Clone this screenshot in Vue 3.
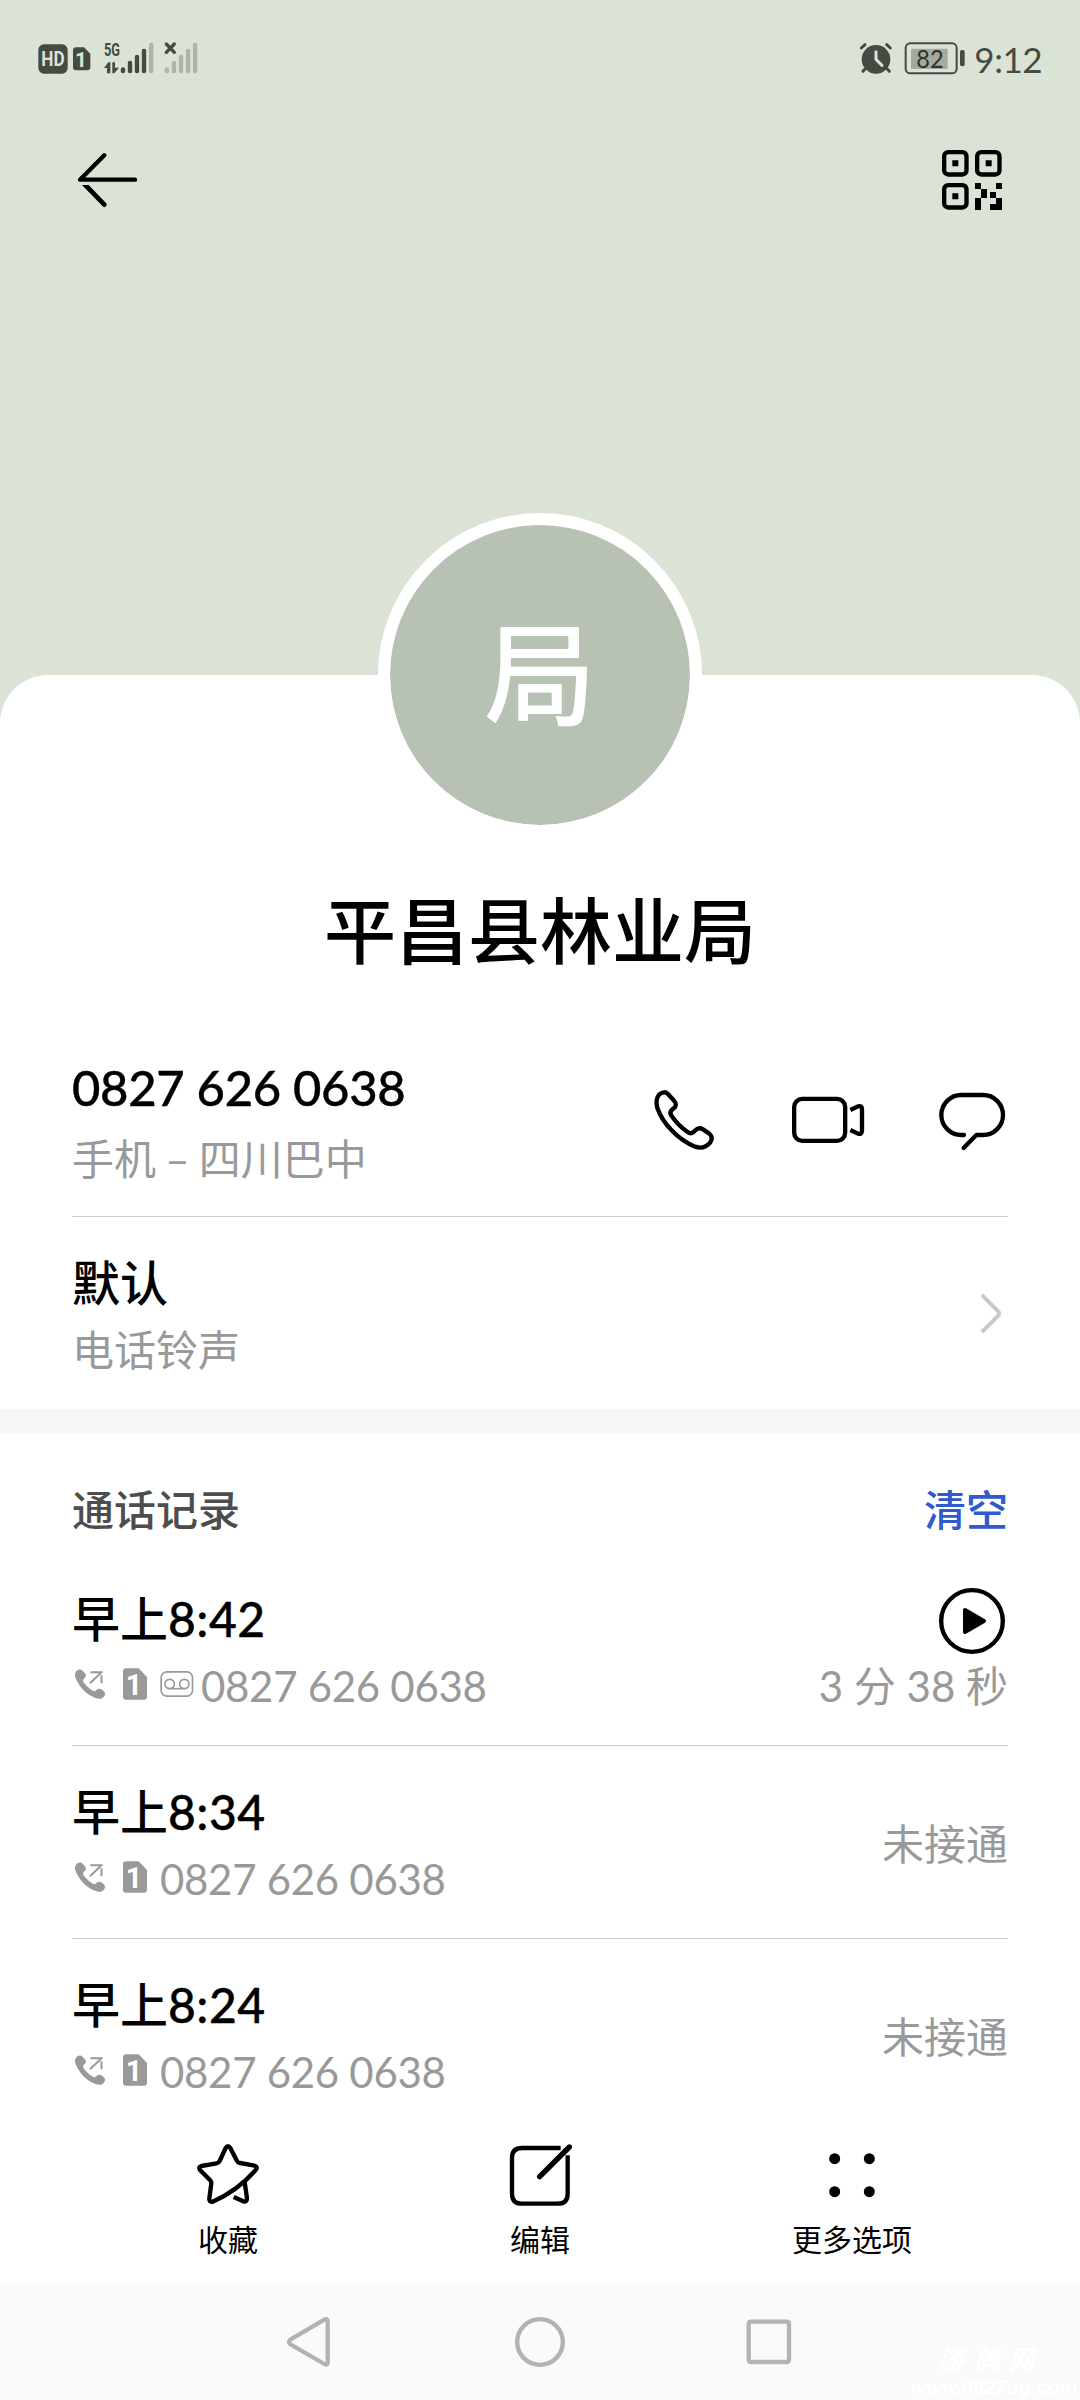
<script setup>
const calls = [
  { period: '早上', time: '8:42', number: '0827 626 0638', recorded: true, result: '3 分 38 秒' },
  { period: '早上', time: '8:34', number: '0827 626 0638', recorded: false, result: '未接通' },
  { period: '早上', time: '8:24', number: '0827 626 0638', recorded: false, result: '未接通' },
]
const firstSignal = [
  { x: 362.5, y: 142, dim: false },
  { x: 383.5, y: 122, dim: false },
  { x: 404.5, y: 104, dim: false },
  { x: 425.5, y: 86, dim: false },
  { x: 447, y: 68, dim: true },
]
const secondSignal = [
  { x: 494, y: 142 },
  { x: 515.5, y: 122 },
  { x: 536.5, y: 104 },
  { x: 558, y: 86 },
  { x: 579, y: 68 },
]
</script>

<template>
  <div class="screen">
    <header class="hero">
      <div class="status">
        <svg class="status-left" viewBox="108 60 492 120">
          <rect x="115" y="73" width="88" height="88" rx="17" class="ink" />
          <text x="159" y="138" class="hd" textLength="70" lengthAdjust="spacingAndGlyphs">HD</text>
          <path d="M228 82H252L271 101V142Q271 151 262 151H228Q219 151 219 142V91Q219 82 228 82Z" class="ink" />
          <text x="243" y="140" class="sim-digit">1</text>
          <text x="312" y="108" class="net" textLength="48" lengthAdjust="spacingAndGlyphs">5G</text>
          <path d="M312 144L325 127H331V160H321V144ZM337 127H345V143H357L343 160H337Z" class="ink" />
          <rect v-for="b in firstSignal" :key="b.x" :x="b.x" :y="b.y" width="13" :height="160 - b.y" rx="6" :class="b.dim ? 'dim' : 'ink'" />
          <rect v-for="b in secondSignal" :key="b.x" :x="b.x" :y="b.y" width="13" :height="160 - b.y" rx="6" class="dim" />
          <path d="M499 72L523 97M523 72L499 97" class="ink-line" stroke-width="10" />
        </svg>
        <div class="status-right">
          <svg class="status-icons" viewBox="108 60 336 120">
            <circle cx="168" cy="118" r="43" class="ink" />
            <path d="M168 95V118L186 136" class="hands" />
            <path d="M124 84L135 74M200 74L211 84M135 147L129 154M202 147L208 154" class="ink-line" stroke-width="9" />
            <rect x="257" y="70" width="153" height="90" rx="14" class="ink-line" stroke-width="6" />
            <rect x="273" y="86" width="110" height="61" rx="3" class="charge" />
            <rect x="420" y="90" width="14" height="49" rx="6" class="ink" />
            <text x="330" y="143" class="percent" textLength="82" lengthAdjust="spacingAndGlyphs">82</text>
          </svg>
          <span class="clock">9:12</span>
        </div>
      </div>
      <div class="appbar">
        <svg class="back" viewBox="228 390 192 180">
          <path d="M313 406L240 479H405" class="line" />
          <path d="M246 495H266L318 549A6.5 6.5 0 0 1 308 559Z" />
        </svg>
        <svg class="qr" viewBox="366 390 180 180">
          <rect x="372.500" y="396.500" width="67" height="67" rx="12" class="line" />
          <rect x="471.500" y="396.500" width="67" height="67" rx="12" class="line" />
          <rect x="372.500" y="495.500" width="67" height="67" rx="12" class="line" />
          <path d="M397 421h18v18h-18zM497 421h18v18h-18zM397 520h18v18h-18zM465 489h18v18h18v27h-18v-27h-18zM528 489h18v18h-18zM510 516h18v18h-18zM465 534h18v36h-18zM528 534h18v36h-36v-18h18z" />
        </svg>
      </div>
    </header>

    <main class="sheet">
      <div class="avatar">局</div>
      <h1 class="name">平昌县林业局</h1>

      <section class="row contact">
        <div class="info">
          <p class="primary phone">0827 626 0638</p>
          <p class="secondary place">手机 – 四川巴中</p>
        </div>
        <div class="actions">
          <svg viewBox="84 105 216 216">
            <path class="line" d="M118 133C127 125 137 125 144 132L162 152C170 161 169 168 161 175L155 180C149 186 150 191 155 198C168 217 185 234 203 246C210 251 215 251 221 246L226 241C233 234 241 233 249 238L267 250C277 258 277 268 271 277C258 293 243 296 225 290C175 270 129 222 112 174C108 158 109 143 118 133Z" />
          </svg>
          <svg viewBox="516 105 216 216">
            <rect x="522.500" y="146.500" width="153" height="126" rx="24" class="line" />
            <path class="line flat" d="M691 180L714 169Q726 166 726 178V242Q726 254 714 251L691 240" />
          </svg>
          <svg viewBox="948 105 216 216">
            <path class="line" d="M1032 255H1024A60 60 0 0 1 1024 135H1089A60 60 0 0 1 1089 255H1069L1031 294" />
          </svg>
        </div>
      </section>

      <section class="row ringtone">
        <div class="info">
          <p class="primary">默认</p>
          <p class="secondary">电话铃声</p>
        </div>
        <svg class="chevron" viewBox="1080 721.500 84 144">
          <path d="M1089 737L1134 782Q1140 789 1134 796L1089 841" />
        </svg>
      </section>

      <div class="band"></div>

      <section class="log">
        <div class="log-head">
          <span class="log-title">通话记录</span>
          <span class="clear">清空</span>
        </div>
        <article v-for="c in calls" :key="c.time" class="row call">
          <div class="info">
            <p class="primary">{{ c.period }}<span class="time">{{ c.time }}</span></p>
            <p class="secondary detail">
              <svg class="i-out" viewBox="96 834 108 108">
                <path class="mute" d="M108 845C113 837 122 836 128 842L136 851C140 857 137 862 131 867C128 871 129 875 133 880C141 890 150 898 160 903C165 905 168 902 172 898C176 895 181 896 186 899L193 905C197 910 195 916 191 921C183 929 171 927 161 922C137 911 118 890 108 867C104 858 104 851 108 845Z" />
                <path class="mute-line" stroke-width="6" d="M150 880L183 848M151 847H188M184.500 856V880" />
              </svg>
              <svg class="i-sim" viewBox="231 834 108 108">
                <path class="mute" d="M258 835H296L321 861V920Q321 929 312 929H258Q249 929 249 920V844Q249 835 258 835Z" />
                <text x="282" y="915" class="sim-mark">1</text>
              </svg>
              <svg v-if="c.recorded" class="i-vm" viewBox="348 834 126 108">
                <g class="mute-line" stroke-width="5">
                  <rect x="363.500" y="845.500" width="94" height="73" rx="17" />
                  <circle cx="389" cy="882" r="14" />
                  <circle cx="433" cy="882" r="14" />
                  <path d="M389 896H433" />
                </g>
              </svg>
              <span class="num">{{ c.number }}</span>
            </p>
          </div>
          <div class="outcome">
            <svg v-if="c.recorded" class="play" viewBox="468 381 216 192">
              <circle cx="576" cy="483" r="92.500" class="line" />
              <path d="M555 450V516L612 483Z" class="triangle" />
            </svg>
            <p class="secondary">{{ c.result }}</p>
          </div>
        </article>
      </section>
    </main>

    <footer class="toolbar">
      <div class="tool">
        <svg viewBox="96 54 216 216">
          <path class="line" d="M197 84Q204 73 211 84L231 123Q233 128 240 129L284 137Q295 141 287 150C262 179 217 219 158 245Q147 248 148 235L154 190Q154 184 150 180L120 150Q114 141 124 138L170 130Q176 129 179 123Z" />
          <path class="line flat" d="M254 186L261 235Q261 247 250 244L221 231" />
        </svg>
        <span>收藏</span>
      </div>
      <div class="tool">
        <svg viewBox="1032 54 216 216">
          <path class="line flat" d="M1202 84H1086Q1056 84 1056 114V221Q1056 251 1086 251H1193Q1223 251 1223 221V106" />
          <path class="line pen" d="M1139 170L1228 81" />
        </svg>
        <span>编辑</span>
      </div>
      <div class="tool">
        <svg viewBox="408 54 216 216">
          <circle cx="464" cy="116" r="16.500" />
          <circle cx="568" cy="116" r="16.500" />
          <circle cx="464" cy="215" r="16.500" />
          <circle cx="568" cy="215" r="16.500" />
        </svg>
        <span>更多选项</span>
      </div>
    </footer>

    <nav class="navbar">
      <svg viewBox="360 576 180 180"><path d="M391 659L493 599Q503 594 503 605V726Q503 738 493 732L391 673Q383 666 391 659Z" /></svg>
      <svg viewBox="1050 576 180 180"><circle cx="1140" cy="666" r="68.500" /></svg>
      <svg viewBox="180 576 180 180"><rect x="206" y="605" width="121" height="121" rx="6" /></svg>
      <div class="watermark">
        <b>游鸽网</b>
        <i>www.0827ug.com</i>
      </div>
    </nav>
  </div>
</template>

<style>
body {
  margin: 0;
  background: #fff;
}
</style>

<style scoped>
.screen {
  width: 1080px;
  height: 2400px;
  overflow: hidden;
  display: flex;
  flex-direction: column;
  background: #dbe3d7;
  color: #000;
  font-family: Lato, "Noto Sans CJK SC", sans-serif;
}
p,
h1 {
  margin: 0;
}
svg {
  display: block;
  overflow: visible;
  flex: none;
}
.line {
  fill: none;
  stroke: #000;
  stroke-width: 13;
  stroke-linecap: round;
  stroke-linejoin: round;
}
.flat {
  stroke-linecap: butt;
}
.pen {
  stroke-width: 16;
}

.hero {
  height: 675px;
  flex: none;
}
.status {
  display: flex;
  justify-content: space-between;
  padding: 40px 38px 0 36px;
  height: 40px;
}
.status-left {
  width: 164px;
  height: 40px;
}
.status-right {
  display: flex;
  gap: 6px;
}
.status-icons {
  width: 112px;
  height: 40px;
}
.clock {
  font-size: 35px;
  line-height: 38px;
  letter-spacing: -0.5px;
  color: #454a43;
}
.ink {
  fill: #454a43;
}
.dim {
  fill: #adb5aa;
}
.ink-line {
  fill: none;
  stroke: #454a43;
  stroke-linecap: round;
}
.hands {
  fill: none;
  stroke: #dbe3d7;
  stroke-width: 9;
  stroke-linecap: round;
}
.charge {
  fill: #a3aaa0;
}
.hd {
  font: 700 58px Roboto, sans-serif;
  fill: #dbe3d7;
  text-anchor: middle;
}
.sim-digit {
  font: 700 62px Roboto, sans-serif;
  fill: #dbe3d7;
  text-anchor: middle;
}
.net {
  font: 700 56px Roboto, sans-serif;
  fill: #454a43;
}
.percent {
  font: 400 76px Lato, sans-serif;
  fill: #2f332e;
  text-anchor: middle;
}
.appbar {
  display: flex;
  justify-content: space-between;
  padding: 70px 78px 0 76px;
}
.back {
  width: 64px;
  height: 60px;
}
.qr {
  width: 60px;
  height: 60px;
}

.sheet {
  height: 1456px;
  flex: none;
  display: flex;
  flex-direction: column;
  background: #fff;
  border-radius: 48px 48px 0 0;
}
.sheet > * {
  flex: none;
}
.avatar {
  width: 300px;
  height: 300px;
  margin: -162px auto 0;
  border: 12px solid #fff;
  border-radius: 50%;
  background: #b7c1b4;
  background-clip: padding-box;
  color: #fff;
  font-size: 112px;
  font-weight: 500;
  line-height: 298px;
  text-align: center;
}
.name {
  margin-top: 43px;
  font-size: 72px;
  font-weight: 500;
  line-height: 100px;
  text-align: center;
}
.row {
  display: flex;
  justify-content: space-between;
  align-items: center;
  margin: 0 72px;
  box-sizing: border-box;
}
.info {
  display: flex;
  flex-direction: column;
  gap: 7px;
}
.primary {
  font-size: 48px;
  font-weight: 500;
  line-height: 64px;
  white-space: nowrap;
}
.secondary {
  font-size: 42px;
  line-height: 56px;
  font-weight: 400;
  color: #999;
  white-space: nowrap;
}
.contact {
  height: 237px;
  padding: 75px 0 29px;
  border-bottom: 1px solid #ccc;
}
.contact .info {
  gap: 12px;
}
.phone {
  font-size: 49px;
  letter-spacing: -0.3px;
}
.place {
  word-spacing: -1.5px;
}
.time {
  letter-spacing: 0.5px;
}
.phone,
.time {
  -webkit-text-stroke: 0.4px #000;
}
.actions {
  display: flex;
  gap: 72px;
}
.actions svg {
  width: 72px;
  height: 72px;
}
.ringtone {
  height: 192px;
  padding: 34px 0 31px;
}
.chevron {
  width: 28px;
  height: 48px;
}
.chevron path {
  fill: none;
  stroke: #c9c9c9;
  stroke-width: 12;
  stroke-linecap: round;
}
.band {
  height: 24px;
  background: #f7f7f7;
}
.log-head {
  display: flex;
  justify-content: space-between;
  height: 71px;
  padding: 49px 72px 0;
  font-size: 42px;
  font-weight: 500;
  line-height: 56px;
}
.log-title {
  color: #4d4d4d;
}
.clear {
  color: #2f5bcd;
}
.call {
  height: 193px;
  padding: 34px 0 31px;
  border-bottom: 1px solid #ccc;
}
.call:last-child {
  height: 192px;
  border-bottom: 0;
}
.detail {
  display: flex;
  align-items: center;
}
.i-out {
  width: 36px;
  height: 36px;
}
.i-sim {
  width: 36px;
  height: 36px;
  margin-left: 9px;
}
.i-vm {
  width: 42px;
  height: 36px;
  margin-left: 3px;
}
.num {
  margin-left: 7px;
  letter-spacing: -0.3px;
}
.i-vm + .num {
  margin-left: 3px;
}
.mute {
  fill: #999;
}
.mute-line {
  fill: none;
  stroke: #999;
}
.sim-mark {
  font: 700 86px Roboto, sans-serif;
  fill: #fff;
  text-anchor: middle;
}
.outcome {
  display: flex;
  flex-direction: column;
  align-items: flex-end;
  gap: 7px;
}
.play {
  width: 72px;
  height: 64px;
}
.triangle {
  stroke: #000;
  stroke-width: 12;
  stroke-linejoin: round;
}

.toolbar {
  height: 153px;
  flex: none;
  display: flex;
  padding: 0 72px;
  background: #fff;
}
.tool {
  flex: 1;
  display: flex;
  flex-direction: column;
  align-items: center;
  gap: 9px;
  padding-top: 7px;
  font-size: 30px;
  line-height: 40px;
}
.tool svg {
  width: 72px;
  height: 72px;
}
.navbar {
  position: relative;
  height: 116px;
  flex: none;
  display: flex;
  justify-content: center;
  align-items: center;
  gap: 170px;
  background: #fafafa;
}
.navbar svg {
  width: 60px;
  height: 60px;
  fill: none;
  stroke: #b3b3b3;
  stroke-width: 13;
}
.watermark {
  position: absolute;
  right: 4px;
  bottom: 1px;
  width: 164px;
  display: flex;
  flex-direction: column;
  align-items: center;
  color: #fff;
  font-style: italic;
}
.watermark b {
  margin-right: 6px;
  font-size: 26px;
  line-height: 34px;
  letter-spacing: 9px;
}
.watermark i {
  font-family: "Liberation Sans", sans-serif;
  font-size: 20px;
  font-weight: 700;
  line-height: 23px;
}
</style>
